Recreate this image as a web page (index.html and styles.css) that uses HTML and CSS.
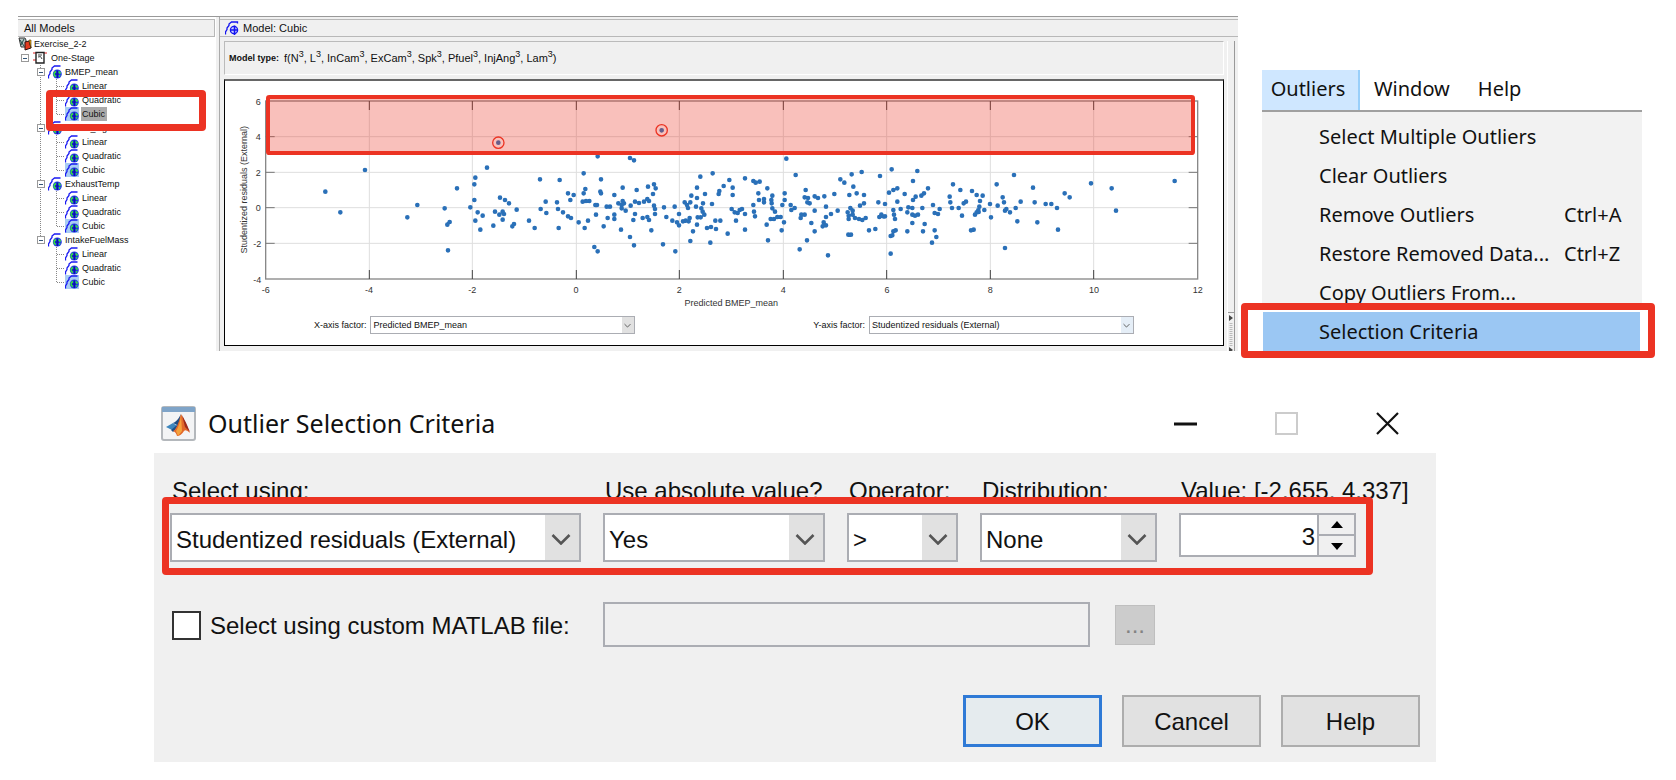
FILE: index.html
```html
<!DOCTYPE html>
<html lang="en">
<head>
<meta charset="utf-8">
<title>Outlier Selection Criteria</title>
<link rel="stylesheet" href="styles.css">
</head>
<body>
<svg class="symbols" aria-hidden="true">
  <symbol id="model" viewBox="0 0 14 14">
    <path d="M0.500 13.500V11L2 8.500V7L4 4.500V3L6.500 1H12.500" fill="none" stroke="#1a1af2" stroke-width="1.300"/>
    <circle cx="9.300" cy="9" r="4.500" fill="#2236e8"/>
    <path d="M5.600 7.200L8 5.500v2.200L6.600 9 8 10.800v1.800L5.400 10.500zM10.600 5.600l2.400 2-.6 1.400-1.800-.6zM10.800 10l2 .2-1.600 2.200z" fill="#35e23c"/>
    <path d="M9.300 5.500V13M7 9h4" stroke="#0a10a0" stroke-width="1.200"/>
  </symbol>
  <symbol id="chevron" viewBox="0 0 20 12">
    <path d="M1.500 2L10 10.500 18.500 2" fill="none" stroke="currentColor" stroke-width="2.600"/>
  </symbol>
</svg>

<main>
  <div class="top">
    <section class="browser">
      <aside class="models">
        <h2 class="pane-title">All Models</h2>
        <div class="tree">
          <div class="node root">
            <svg class="icon" viewBox="0 0 14 14"><path d="M1 1h6l1 2v7H3z" fill="#b9c4c4" stroke="#333"/><path d="M2 3l4 6M6 2L3 8" stroke="#1c4b46"/><path d="M7 5l4-1 2 7-6 2z" fill="#e23b20" stroke="#301010"/><path d="M11 3h2v8z" fill="#f2b31c" stroke="#4a3000" stroke-width=".6"/></svg>
            <span>Exercise_2-2</span>
          </div>
          <div class="node stage">
            <button class="toggle" aria-label="Collapse One-Stage"></button>
            <svg class="icon" viewBox="0 0 14 14"><path d="M0 2h3M0 9h3M11 2h3" stroke="#e02020"/><path d="M3 1.500h8v10.500H3z" fill="#fff" stroke="#222" stroke-width="1.400"/><path d="M5 4h4M5 6q3-2 4 2" fill="none" stroke="#444"/></svg>
            <span>One-Stage</span>
          </div>
          <ul class="responses">
            <li>
              <div class="node response"><button class="toggle" aria-label="Collapse BMEP_mean"></button><svg class="icon"><use href="#model"/></svg><span>BMEP_mean</span></div>
              <ul class="fits">
                <li class="node"><svg class="icon"><use href="#model"/></svg><span>Linear</span></li>
                <li class="node"><svg class="icon"><use href="#model"/></svg><span>Quadratic</span></li>
                <li class="node best"><svg class="icon"><use href="#model"/></svg><span class="current">Cubic</span></li>
              </ul>
            </li>
            <li>
              <div class="node response"><button class="toggle" aria-label="Collapse BMEP_sigma"></button><svg class="icon"><use href="#model"/></svg><span>BMEP_sigma</span></div>
              <ul class="fits">
                <li class="node"><svg class="icon"><use href="#model"/></svg><span>Linear</span></li>
                <li class="node"><svg class="icon"><use href="#model"/></svg><span>Quadratic</span></li>
                <li class="node best"><svg class="icon"><use href="#model"/></svg><span>Cubic</span></li>
              </ul>
            </li>
            <li>
              <div class="node response"><button class="toggle" aria-label="Collapse ExhaustTemp"></button><svg class="icon"><use href="#model"/></svg><span>ExhaustTemp</span></div>
              <ul class="fits">
                <li class="node"><svg class="icon"><use href="#model"/></svg><span>Linear</span></li>
                <li class="node"><svg class="icon"><use href="#model"/></svg><span>Quadratic</span></li>
                <li class="node best"><svg class="icon"><use href="#model"/></svg><span>Cubic</span></li>
              </ul>
            </li>
            <li class="last">
              <div class="node response"><button class="toggle" aria-label="Collapse IntakeFuelMass"></button><svg class="icon"><use href="#model"/></svg><span>IntakeFuelMass</span></div>
              <ul class="fits">
                <li class="node"><svg class="icon"><use href="#model"/></svg><span>Linear</span></li>
                <li class="node"><svg class="icon"><use href="#model"/></svg><span>Quadratic</span></li>
                <li class="node best"><svg class="icon"><use href="#model"/></svg><span>Cubic</span></li>
              </ul>
            </li>
          </ul>
        </div>
        <div class="mark mark-tree"></div>
      </aside>

      <section class="model">
        <h2 class="pane-title"><svg class="icon" viewBox="0 0 14 14"><path d="M.5 13.500V11L2 8.500V7L4 4.500V3L6.500 1H12.500V2.500" fill="none" stroke="#1414f0" stroke-width="1.300"/><circle cx="9" cy="9" r="3.600" fill="#cfd4ff" stroke="#1414f0" stroke-width="1.300"/><path d="M9.500 4.500V14M6 9h7" stroke="#1414f0" stroke-width="1.600"/></svg>Model: Cubic</h2>
        <div class="model-body">
          <div class="view">
            <p class="formula"><b>Model type:</b> <span>f(N<sup>3</sup>, L<sup>3</sup>, InCam<sup>3</sup>, ExCam<sup>3</sup>, Spk<sup>3</sup>, Pfuel<sup>3</sup>, InjAng<sup>3</sup>, Lam<sup>3</sup>)</span></p>
            <div class="plot">
              <svg class="chart" viewBox="15 6 2994 693" role="img" aria-label="Studentized residuals against predicted BMEP_mean">
                <path class="grid" d="M448 66V600M757 66V600M1069 66V600M1378 66V600M1690 66V600M2000 66V600M2311 66V600M2621 66V600M137 173H2933M137 280H2933M137 386H2933M137 493H2933"/>
                <rect class="frame" x="137" y="66" width="2796" height="534"/>
                <path class="ticks" d="M448 66v27M757 66v27M1069 66v27M1378 66v27M1690 66v27M2000 66v27M2311 66v27M2621 66v27M448 600v-27M757 600v-27M1069 600v-27M1378 600v-27M1690 600v-27M2000 600v-27M2311 600v-27M2621 600v-27"/>
                <path class="ticks side" d="M137 173h27M137 280h27M137 386h27M137 493h27M2933 173h-27M2933 280h-27M2933 386h-27M2933 493h-27"/>
                <path class="dots" d="M316 338h0M361 400h0M435 273h0M562 415h0M592 378h0M674 388h0M684 514h0M682 437h0M689 429h0M711 328h0M751 385h0M766 296h0M763 316h0M763 363h0M773 400h0M766 425h0M788 410h0M781 452h0M801 266h0M820 440h0M825 398h0M840 356h0M855 363h0M867 373h0M848 398h0M852 405h0M838 407h0M848 422h0M890 392h0M882 435h0M877 442h0M927 425h0M944 447h0M960 301h0M962 390h0M977 368h0M979 402h0M835 191h0M1325 154h0"/>
                <path class="dots" transform="translate(960 0)" d="M59 303h0M51 370h0M54 390h0M56 447h0M69 400h0M84 343h0M101 348h0M91 363h0M84 412h0M93 417h0M116 430h0M131 283h0M131 343h0M136 330h0M128 368h0M138 366h0M148 366h0M166 378h0M171 378h0M168 407h0M144 425h0M134 447h0M173 232h0M183 301h0M181 338h0M183 343h0M163 504h0M173 517h0M191 442h0M200 383h0M210 383h0M203 417h0M223 407h0M223 420h0M223 348h0M248 326h0M235 373h0M248 366h0M245 378h0M252 373h0M245 388h0M257 395h0M243 452h0M270 237h0M282 244h0M270 474h0M282 499h0M272 380h0M285 368h0M297 372h0M290 333h0M285 405h0M280 423h0M308 417h0M324 323h0M312 368h0M322 360h0M327 366h0M322 414h0M327 423h0M334 454h0M342 316h0M347 328h0M339 345h0M342 380h0M345 390h0M345 405h0M369 496h0M372 385h0M379 414h0M397 425h0M404 383h0M417 405h0M411 430h0M417 439h0M429 427h0M406 517h0M437 425h0M446 427h0M449 417h0M434 370h0M451 370h0M441 378h0M444 387h0M454 350h0M471 326h0M471 357h0M481 293h0M518 283h0M495 345h0M468 383h0M484 388h0M489 373h0M488 398h0M493 407h0M473 415h0M482 415h0M471 437h0M459 457h0M451 486h0M511 491h0M501 447h0M513 444h0M528 450h0M526 425h0M541 425h0M516 375h0M538 336h0M536 345h0M551 321h0M568 303h0M578 326h0M578 348h0M615 298h0M575 390h0M584 400h0M593 402h0M599 393h0M606 390h0M615 405h0M588 425h0M615 452h0M563 464h0M640 306h0M647 311h0M659 308h0M655 343h0M682 328h0M672 360h0M672 370h0M657 363h0M640 378h0M642 398h0M645 412h0M697 350h0M694 363h0M695 373h0M697 388h0M705 398h0M680 437h0M692 420h0M702 420h0M712 414h0M722 414h0M732 430h0M725 454h0M684 484h0M727 378h0M734 343h0M734 363h0M739 239h0M767 288h0M752 378h0M754 393h0M764 387h0M797 333h0M794 355h0M804 357h0M802 370h0M809 373h0M784 407h0M794 407h0M782 417h0M814 432h0M824 395h0M824 352h0M834 357h0M853 352h0M858 383h0M858 414h0M851 430h0M848 442h0M858 439h0M824 457h0M801 484h0M779 511h0M864 529h0M873 405h0M883 345h0M893 395h0M901 301h0M913 311h0M935 286h0M965 279h0M940 323h0M950 343h0M928 348h0M972 348h0M972 373h0M960 380h0M931 387h0M923 400h0M926 410h0M938 395h0M938 407h0M926 420h0M945 417h0M957 420h0M967 423h0M977 417h0M925 467h0M933 467h0M987 454h0M1006 450h0"/>
                <path class="dots" transform="translate(1920 0)" d="M60 291h0M55 370h0M75 375h0M58 414h0M64 407h0M70 412h0M75 412h0M95 271h0M172 276h0M159 306h0M112 328h0M100 333h0M87 341h0M134 345h0M204 328h0M192 343h0M184 350h0M167 353h0M159 363h0M112 368h0M100 393h0M122 390h0M145 385h0M142 400h0M157 387h0M187 387h0M102 407h0M105 420h0M157 407h0M165 410h0M174 407h0M157 432h0M194 435h0M189 457h0M142 457h0M107 454h0M100 457h0M97 469h0M92 471h0M92 524h0M216 491h0M229 474h0M224 454h0M219 378h0M239 390h0M224 402h0M234 405h0M279 316h0M301 333h0M269 353h0M271 370h0M276 387h0M296 387h0M311 373h0M318 368h0M306 410h0M336 336h0M350 348h0M368 350h0M360 366h0M358 383h0M355 393h0M350 400h0M345 407h0M373 393h0M356 399h0M333 454h0M341 452h0M390 375h0M393 415h0M410 316h0M428 355h0M432 370h0M413 380h0M439 390h0M435 395h0M450 400h0M435 507h0M462 288h0M467 387h0M472 427h0M482 368h0M519 326h0M524 370h0M532 430h0M557 375h0M574 375h0M591 387h0M594 452h0M614 343h0M629 355h0M693 313h0M755 328h0M768 395h0M944 306h0"/>
                <g class="scale end">
                  <text x="122" y="77">6</text><text x="122" y="184">4</text><text x="122" y="291">2</text><text x="122" y="397">0</text><text x="124" y="504">-2</text><text x="124" y="611">-4</text>
                </g>
                <g class="scale">
                  <text x="137" y="641">-6</text><text x="447" y="641">-4</text><text x="757" y="641">-2</text><text x="1068" y="641">0</text><text x="1378" y="641">2</text><text x="1690" y="641">4</text><text x="2001" y="641">6</text><text x="2311" y="641">8</text><text x="2622" y="641">10</text><text x="2933" y="641">12</text>
                  <text x="1534" y="681">Predicted BMEP_mean</text>
                  <text transform="translate(82 332) rotate(-90)">Studentized residuals (External)</text>
                </g>
                <rect class="region" x="144" y="54" width="2775" height="168" rx="4"/>
                <circle class="outlier" cx="835" cy="191" r="17"/>
                <circle class="outlier" cx="1325" cy="154" r="17"/>
              </svg>
              <div class="factors">
                <div class="factor"><label for="x-factor">X-axis factor:</label><span class="combo"><select id="x-factor"><option>Predicted BMEP_mean</option></select><svg class="arrow"><use href="#chevron"/></svg></span></div>
                <div class="factor"><label for="y-factor">Y-axis factor:</label><span class="combo hot"><select id="y-factor"><option>Studentized residuals (External)</option></select><svg class="arrow"><use href="#chevron"/></svg></span></div>
              </div>
            </div>
          </div>
          <div class="sash"><svg viewBox="0 0 6 39"><path d="M0 .5h6" stroke="#999"/><path d="M1 3l4 3-4 3zM1 35l4 3-4 3z" fill="#444"/><path d="M3 11v23" stroke="#bbb" stroke-width="3" stroke-dasharray="1 1"/></svg></div>
        </div>
      </section>
    </section>

    <nav class="menu">
      <div class="menubar">
        <button class="open">Outliers</button><button>Window</button><button>Help</button>
      </div>
      <div class="menu-list">
        <button>Select Multiple Outliers</button>
        <button>Clear Outliers</button>
        <button>Remove Outliers<kbd>Ctrl+A</kbd></button>
        <button>Restore Removed Data...<kbd>Ctrl+Z</kbd></button>
        <button>Copy Outliers From...</button>
        <button class="chosen">Selection Criteria</button>
        <div class="mark mark-menu"></div>
      </div>
    </nav>
  </div>

  <section class="dialog">
    <header class="titlebar">
      <svg class="logo" viewBox="0 0 35 35"><rect x="1" y="1" width="33" height="33" rx="2" fill="#f3f4f5" stroke="#b4b8bc" stroke-width="2"/><path d="M1 1h33v5H1z" fill="#7fa4c8"/><path d="M5 21l7-4 4 3-5 4z" fill="#3d86bd"/><path d="M12 17q4-1 8-9l-2 12-6 6-2-2 6-5z" fill="#1e4e86"/><path d="M20 8q4 7 9 19-4-4-6-2-3 5-7 5-1-4-4-5 4-1 8-17z" fill="#e2682a"/><path d="M20 9q-1 10-5 16l2 5 4-5z" fill="#f4a23c"/><path d="M21 9q4 7 8 17l-5-5z" fill="#9c2a1c"/></svg>
      <h1>Outlier Selection Criteria</h1>
      <div class="window-buttons">
        <button aria-label="Minimize"><svg viewBox="0 0 23 23"><path d="M0 12h23" stroke="#111" stroke-width="3"/></svg></button>
        <button aria-label="Maximize" disabled><svg viewBox="0 0 23 23"><path d="M1 1h21v21H1z" fill="none" stroke="#ccc" stroke-width="2"/></svg></button>
        <button aria-label="Close"><svg viewBox="0 0 23 23"><path d="M1 1l21 21M22 1L1 22" stroke="#111" stroke-width="2.200"/></svg></button>
      </div>
    </header>
    <form class="criteria">
      <div class="fields">
        <label for="using">Select using:</label>
        <label for="absolute">Use absolute value?</label>
        <label for="operator">Operator:</label>
        <label for="distribution">Distribution:</label>
        <label for="value">Value: [-2.655, 4.337]</label>
        <span class="combo large"><select id="using"><option>Studentized residuals (External)</option></select><svg class="arrow"><use href="#chevron"/></svg></span>
        <span class="combo large"><select id="absolute"><option>Yes</option></select><svg class="arrow"><use href="#chevron"/></svg></span>
        <span class="combo large"><select id="operator"><option>&gt;</option></select><svg class="arrow"><use href="#chevron"/></svg></span>
        <span class="combo large"><select id="distribution"><option>None</option></select><svg class="arrow"><use href="#chevron"/></svg></span>
        <span class="spinner"><input id="value" type="text" value="3"><span class="steps"><button type="button" aria-label="Increase"><svg viewBox="0 0 12 8"><path d="M6 0l6 7H0z"/></svg></button><button type="button" aria-label="Decrease"><svg viewBox="0 0 12 8"><path d="M0 1h12L6 8z"/></svg></button></span></span>
        <div class="mark mark-fields"></div>
      </div>
      <div class="custom">
        <label><input type="checkbox">Select using custom MATLAB file:</label>
        <input class="path" type="text" aria-label="Custom MATLAB file" disabled>
        <button class="browse" type="button" disabled>...</button>
      </div>
      <div class="actions">
        <button type="button" class="primary">OK</button><button type="button">Cancel</button><button type="button">Help</button>
      </div>
    </form>
  </section>
</main>
</body>
</html>
```
FILE: styles.css
```css
* { box-sizing: border-box; }
body { margin: 0; background: #fff; color: #111; font: 9px "Liberation Sans", Arial, sans-serif; }
h1, h2, p, ul { margin: 0; padding: 0; font-weight: normal; }
ul { list-style: none; }
button, select, input { font: inherit; color: inherit; margin: 0; border-radius: 0; }
button { padding: 0; border: 0; background: none; }
.symbols { position: absolute; width: 0; height: 0; }
.mark { position: absolute; border: 7px solid #ec3323; border-radius: 4px; pointer-events: none; z-index: 2; }

.top { display: flex; align-items: flex-start; gap: 24px; padding: 16px 34px 0 18px; }

/* Model browser */
.browser { flex: 1; display: flex; min-width: 0; border-top: 1px solid #999; background: #f0f0f0; }
.models { position: relative; width: 198px; padding-top: 2px; background: #fff; }
.pane-title { display: flex; align-items: center; height: 18px; border: 1px solid #b8b8b8; border-left: 0; background: #f0f0f0; font-size: 11px; padding-left: 6px; }
.models .pane-title { margin-right: 1px; }
.icon { width: 14px; height: 14px; flex: none; }
.node { display: flex; align-items: center; height: 14px; gap: 2px; white-space: nowrap; }
.stage { padding-left: 3px; gap: 4px; }
.response { padding-left: 19px; gap: 3px; }
.toggle { position: relative; z-index: 1; width: 8px; height: 8px; border: 1px solid #999; background: linear-gradient(#357, #357) center / 4px 1px no-repeat #fff; }
.responses, .fits { position: relative; }
.responses::before { content: ""; position: absolute; left: 22px; top: 0; bottom: 49px; border-left: 1px dotted #888; }
.fits::before { content: ""; position: absolute; left: 38px; top: 0; bottom: 7px; border-left: 1px dotted #888; }
.fits .node { padding-left: 39px; gap: 2px; }
.fits .node::before { content: ""; width: 7px; margin-right: -1px; border-top: 1px dotted #888; }
.fits .node span { padding: 1px; }
.best .icon { background: #a9cdf2; }
.fits .node .current { padding: 2px 2px 2px 1px; background: #aaa; }
.mark-tree { left: 28px; top: 73px; width: 160px; height: 41px; }

.model { flex: 1; display: flex; flex-direction: column; min-width: 0; margin-left: 3px; padding-top: 2px; border-left: 1px solid #aaa; }
.model .pane-title { gap: 4px; padding-left: 5px; border-right: 0; }
.model-body { flex: 1; display: flex; padding-left: 4px; gap: 3px; }
.view { flex: 1; min-width: 0; padding: 4px 0 5px; }
.formula { display: flex; align-items: center; gap: 5px; height: 34px; margin-bottom: 4px; padding-left: 4px; border: 1px solid #fff; border-top-color: #bbb; border-left-color: #bbb; white-space: nowrap; }
.formula span { font-size: 11px; }
.formula sup { font-size: 9px; line-height: 0; }
.plot { background: #fff; border: 1px solid #000; border-top: 2px solid #666; padding-bottom: 11px; }
.sash { display: flex; align-items: flex-end; width: 11px; margin-top: 4px; padding-right: 4px; border-left: 1px solid #fff; background: linear-gradient(#999, #999) 6px 0 / 1px 100% no-repeat; }
.sash svg { width: 6px; height: 39px; }

.chart { display: block; width: 100%; }
.grid { stroke: #dedede; stroke-width: 3; fill: none; }
.frame { fill: none; stroke: #888; stroke-width: 4; }
.ticks { stroke: #444; stroke-width: 3; }
.side { stroke: #777; }
.dots { fill: none; stroke: #2a70b8; stroke-width: 14; stroke-linecap: round; }
.scale { font-size: 27px; fill: #333; text-anchor: middle; }
.end { text-anchor: end; }
.region { fill: rgb(236 51 35 / 31%); stroke: #ec3323; stroke-width: 12; }
.outlier { fill: none; stroke: #ec3323; stroke-width: 4; }

.factors { display: flex; justify-content: space-around; padding-top: 4px; }
.factor { display: flex; align-items: center; gap: 4px; }
.combo { position: relative; display: block; width: 265px; color: #555; }
.combo select { display: block; width: 100%; height: 18px; padding: 0 14px 0 2px; border: 1px solid #abadb3; appearance: none; color: #111; background: linear-gradient(#e1e1e1, #e1e1e1) right / 12px 100% no-repeat #fff; }
.combo.hot select { background-image: linear-gradient(#e5eef7, #e5eef7); }
.arrow { position: absolute; right: 4px; top: 7px; width: 7px; height: 5px; pointer-events: none; }

/* Menu */
.menu { width: 380px; margin-top: 54px; font: 20px "Noto Sans", "Open Sans", sans-serif; }
.menubar { display: flex; height: 42px; border-bottom: 2px solid #a0a0a0; }
.menubar button { padding: 0 14px 4px; }
.menubar .open { width: 98px; padding: 0 4px 4px 0; background: #cfe7ff; border-right: 2px solid #99cffa; }
.menu-list { position: relative; padding-top: 5px; background: linear-gradient(#f2f2f2, #f2f2f2) top / 100% 195px no-repeat; }
.menu-list button { display: flex; align-items: center; justify-content: space-between; width: 100%; height: 39px; padding: 0 15px 0 57px; text-align: left; white-space: nowrap; }
.menu-list kbd { font: inherit; width: 63px; }
.menu-list .chosen { width: auto; min-width: 377px; margin: 0 2px 0 1px; padding-left: 56px; background: #9bc7f3; }
.mark-menu { left: -21px; right: -13px; bottom: -7px; height: 55px; }

/* Dialog */
.dialog { margin: 42px 240px 0 154px; font-size: 24px; }
.titlebar { display: flex; align-items: center; height: 60px; padding: 0 37px 0 7px; gap: 12px; }
.titlebar h1 { font: 25px "Noto Sans", "Open Sans", sans-serif; }
.logo { width: 35px; height: 35px; }
.window-buttons { display: flex; gap: 78px; margin-left: auto; }
.window-buttons button, .window-buttons svg { display: block; width: 23px; height: 23px; }
.criteria { padding: 24px 16px 15px 16px; background: #f0f0f0; }
.fields { position: relative; display: grid; grid-template-columns: minmax(0, 411fr) minmax(0, 222fr) minmax(0, 111fr) minmax(0, 177fr) minmax(0, 241fr); column-gap: 22px; row-gap: 8px; }
.fields label { line-height: 28px; padding-left: 2px; white-space: nowrap; }
.combo.large { width: 100%; }
.large select { height: 49px; padding: 4px 36px 0 4px; border-width: 2px; background-size: 34px 100%; }
.large .arrow { right: 10px; top: 20px; width: 20px; height: 12px; }
.spinner { display: flex; width: 177px; max-width: 100%; height: 44px; border: 2px solid #abadb3; background: #fff; }
.spinner input { flex: 1; min-width: 0; border: 0; padding: 4px 2px 0; text-align: right; background: none; }
.steps { display: flex; flex-direction: column; gap: 2px; width: 37px; border-left: 2px solid #abadb3; background: #abadb3; }
.steps button { flex: 1; display: flex; align-items: center; justify-content: center; background: #f0f0f0; }
.steps svg { width: 12px; height: 8px; }
.mark-fields { left: -8px; right: 47px; top: 20px; bottom: -13px; }
.custom { display: flex; align-items: center; gap: 25px; margin-top: 40px; }
.custom label { display: flex; align-items: center; gap: 9px; width: 408px; padding-top: 2px; white-space: nowrap; }
.custom input[type="checkbox"] { appearance: none; width: 29px; height: 29px; margin-left: 2px; border: 2px solid #333; background: #fff; }
.path { flex: 0 1 487px; height: 45px; border: 2px solid #abadb3; background: #f0f0f0; }
.browse { width: 40px; height: 40px; border: 1px solid #bfbfbf; background: #ccc; color: #838383; }
.actions { display: flex; justify-content: flex-end; gap: 20px; margin-top: 48px; }
.actions button { width: 139px; height: 52px; padding-top: 2px; border: 2px solid #adadad; background: #e1e1e1; }
.actions .primary { border: 3px solid #2f7ad6; background: #e5ebee; }
```
